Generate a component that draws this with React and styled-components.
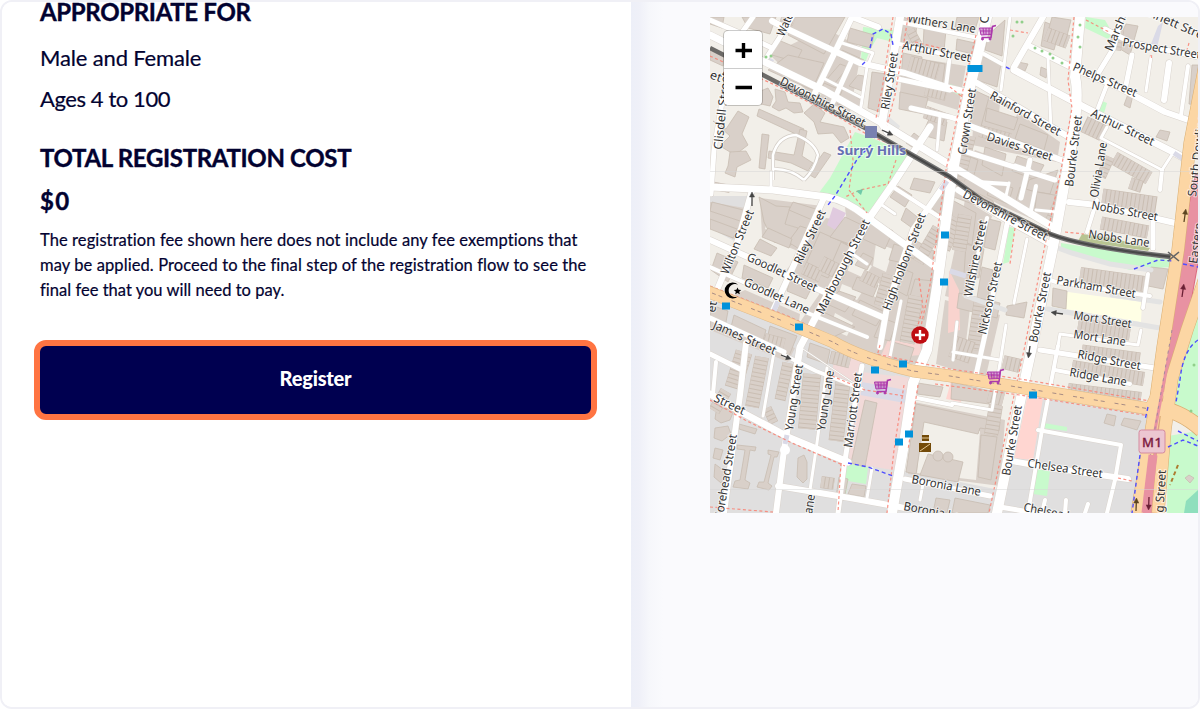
import React from 'react';
import styled, { createGlobalStyle } from 'styled-components';

const GlobalStyle = createGlobalStyle`
  body {
    margin: 0;
    background: #fff;
  }
`;

const Frame = styled.div`
  box-sizing: border-box;
  display: flex;
  width: 1200px;
  height: 709px;
  border: 2px solid #f0f0f6;
  border-radius: 12px;
  overflow: hidden;
  color: #020230;
  font-family: Lato, 'Open Sans', sans-serif;
`;

const Details = styled.main`
  box-sizing: border-box;
  flex: none;
  width: 629px;
  padding: 0 34px 0 38px;
  background: #fff;
`;

const Aside = styled.aside`
  display: flex;
  flex: 1;
  align-items: flex-start;
  justify-content: flex-end;
  padding-top: 15px;
  background: linear-gradient(90deg, #edeff8 0, #eff0f8 8px, #f6f7fb 18px, #fafafd 32px);
`;

const Heading = styled.h2`
  margin: ${({ top }) => top}px 0 0;
  font-size: 24px;
  font-weight: 700;
  line-height: ${({ line }) => line}px;
  letter-spacing: ${({ spacing }) => spacing}px;
  white-space: nowrap;
  -webkit-text-stroke: 0.4px currentColor;
`;

const Facts = styled.div`
  margin-top: 15px;
  font-size: 22px;
  line-height: 41px;
  -webkit-text-stroke: 0.2px currentColor;
`;

const Fact = styled.div`
  letter-spacing: ${({ spacing }) => spacing}px;
`;

const Note = styled.p`
  margin: 12px 0 0;
  font-size: 16.5px;
  line-height: 25px;
  white-space: nowrap;
  -webkit-text-stroke: 0.2px currentColor;
`;

const NoteLine = styled.span`
  display: block;
  letter-spacing: ${({ spacing }) => spacing}px;
`;

const RegisterButton = styled.button`
  box-sizing: border-box;
  display: block;
  width: 563px;
  height: 80px;
  margin: 37px 0 0 -6px;
  padding: 0 0 5px;
  border: 6px solid #ff7442;
  border-radius: 12px;
  background: #000050;
  color: #fff;
  font: 900 20px Lato, sans-serif;
  letter-spacing: -0.2px;
`;

const MapBox = styled.div`
  position: relative;
  width: 488px;
  height: 496px;
  overflow: hidden;
  background: #f2efe9;
`;

const MapDrawing = styled.svg`
  display: block;
`;

const ZoomControl = styled.div`
  position: absolute;
  top: 14px;
  left: 14px;
  border-radius: 4px;
  background: #fff;
  box-shadow: 0 0 0 1px rgba(0, 0, 0, 0.2);
`;

const ZoomButton = styled.button`
  display: flex;
  box-sizing: border-box;
  align-items: center;
  justify-content: center;
  width: 38px;
  height: 37px;
  padding: 2px 0 0 1px;
  border: 0;
  background: none;
  & + & {
    padding-top: 1px;
    border-top: 1px solid #ccc;
  }
`;

// [points, fill]
const areas = [
  ['710,297 790,325 870,362 910,372 900,440 890,513 710,513', '#e0dfdf'],
  ['710,196 752,196 736,242 710,228', '#e0dfdf'],
  ['1038,392 1150,410 1136,513 997,513 1012,450', '#e0dfdf'],
  ['900,470 1000,490 995,513 892,513', '#e0dfdf'],
  ['845,207 867,220 938,272 925,366 870,358 835,340 800,322 850,250', '#d9d0c9'],
  ['826,218 862,224 824,290 785,272', '#d9d0c9'],
  ['745,290 800,314 798,328 728,298', '#d9d0c9'],
  ['712,318 795,348 788,362 710,330', '#d9d0c9'],
  ['965,200 992,216 968,302 945,296', '#d9d0c9'],
  ['945,300 1000,315 985,380 936,364', '#d9d0c9'],
  ['975,150 1060,182 1052,228 1000,205 955,180', '#d9d0c9'],
  ['975,92 1000,100 1060,142 1057,162 972,145', '#d9d0c9'],
  ['904,56 966,66 958,110 900,92', '#d9d0c9'],
  ['770,55 825,28 862,48 850,112 812,96', '#d9d0c9'],
  ['760,198 822,206 800,252 762,236', '#d9d0c9'],
  ['710,202 745,208 736,240 710,228', '#d9d0c9'],
  ['914,402 1005,420 1000,486 908,474', '#d9d0c9'],
  ['847,252 872,266 864,278 842,268', '#f2efe9'],
  ['876,243 893,249 886,272 873,266', '#f2efe9'],
  ['835,313 853,323 847,336 830,329', '#f2efe9'],
  ['898,262 905,264 896,300 890,297', '#f2efe9'],
  ['842,284 862,292 857,300 839,293', '#f2efe9'],
  ['876,282 886,287 883,299 872,296', '#f2efe9'],
  ['788,70 806,76 800,88 782,80', '#f2efe9'],
  ['770,212 780,216 773,232 765,229', '#f2efe9'],
  ['786,224 804,230 798,240 784,236', '#f2efe9'],
  ['1000,104 1018,113 1014,120 999,113', '#f2efe9'],
  ['988,148 1006,158 996,172 984,166', '#f2efe9'],
  ['970,308 982,311 976,344 966,342', '#f2efe9'],
  ['862,372 910,378 898,470 848,462', '#f2dad9'],
  ['878,400 905,404 893,470 868,466', '#f2d9d9'],
  ['835,352 862,362 858,384 832,374', '#f2dad9'],
  ['888,340 920,343 922,355 880,358', '#f6d6d2'],
  ['895,375 908,378 905,388 893,385', '#f2dad9'],
  ['952,378 964,382 961,402 946,399', '#ffd6d1'],
  ['949,270 959,290 960,330 948,333', '#f9d3ce'],
  ['1028,394 1043,398 1033,460 1014,458', '#ffd6d1'],
  ['855,132 872,138 915,157 895,184 867,213 845,202 818,194 830,178', '#c8facc'],
  ['863,27 893,30 893,42 877,38 870,50 865,63 861,60', '#c8facc'],
  ['1086,17 1105,20 1113,34 1108,39 1085,28', '#c8facc'],
  ['1061,243 1171,260 1171,267 1130,270 1061,251', '#c8facc'],
  ['1009,227 1015,228 1009,262 1003,264', '#c8facc'],
  ['1102,101 1107,103 1104,113 1098,110', '#c8facc'],
  ['950,84 963,88 961,96 950,91', '#c8facc'],
  ['1044,423 1067,427 1067,431 1043,428', '#c8facc'],
  ['1035,468 1050,471 1047,496 1033,494', '#c8facc'],
  ['844,463 868,467 866,484 848,481 846,494 838,493', '#c8facc'],
  ['1198,297 1182,350 1177,380 1168,403 1198,421', '#c8facc'],
  ['1168,436 1198,431 1198,513 1167,513', '#c8facc'],
  ['1198,490 1186,501 1184,513 1198,513', '#8fdfbd'],
  ['1068,292 1142,302 1141,322 1054,307 1052,300', '#ffffe5'],
  ['833,207 846,213 837,231 827,225', '#e0cadf'],
  ['766,56 774,60 771,66 763,63', '#dadae7'],
  ['862,382 906,390 905,403 860,395', '#dadae7'],
  ['1158,26 1163,22 1157,48 1151,44', '#dadae7'],
  ['887,115 900,126 896,134 887,128', '#e4e4e4'],
  ['1082,234 1112,238 1150,248 1148,251 1078,241', '#b8c492'],
  ['922,420 980,431 976,480 917,473', '#f2efe9'],
];

const buildings = [
  '794,17 845,17 824,54 788,35',
  '776,39 802,50 796,62 772,55',
  '788,55 824,63 812,90 768,70',
  '850,28 874,35 871,48 847,42',
  '842,50 864,60 862,65 839,57',
  '824,83 840,90 833,106 817,98',
  '858,75 864,76 862,91 849,86',
  '843,88 861,100 859,110 837,104',
  '872,72 887,74 880,112 868,108',
  '840,64 848,67 835,83 827,79',
  '710,50 724,54 723,66 710,60',
  '742,17 776,17 770,34 748,28',
  '710,17 724,17 722,28 710,24',
  '903,17 917,22 915,45 901,43',
  '924,28 946,30 944,51 923,46',
  '903,53 922,57 919,81 901,77',
  '929,61 945,64 942,86 926,82',
  '900,92 928,98 924,114 899,109',
  '930,117 947,122 944,141 922,135',
  '914,133 922,139 915,149 906,143',
  '957,17 979,17 975,30 955,27',
  '957,39 975,43 973,54 956,50',
  '988,35 1005,20 1002,56 985,50',
  '981,56 1001,64 997,87 977,80',
  '1045,22 1060,28 1054,50 1041,46',
  '1052,17 1071,20 1067,36 1049,28',
  '1018,62 1028,64 1025,71 1017,68',
  '1041,67 1048,70 1046,78 1040,75',
  '1126,24 1138,26 1130,55 1115,46',
  '1192,65 1198,65 1198,105 1189,104',
  '1160,130 1170,132 1167,141 1156,137',
  '1128,94 1133,95 1130,108 1124,105',
  '976,91 989,97 980,130 970,125',
  '987,108 1018,118 1014,130 985,121',
  '1020,124 1048,135 1044,150 1015,139',
  '985,147 1006,154 1002,176 982,165',
  '1017,156 1044,165 1036,180 1012,171',
  '1029,180 1058,170 1050,194 1026,190',
  '963,154 978,160 974,175 961,168',
  '955,181 993,201 997,213 951,196',
  '993,181 1013,188 1008,204 987,195',
  '1020,187 1035,192 1029,213 1014,207',
  '1037,192 1060,196 1054,220 1034,216',
  '952,200 976,213 972,245 953,237',
  '966,244 984,249 979,278 964,274',
  '989,219 1001,222 995,250 984,247',
  '982,267 993,270 983,328 973,322',
  '959,293 1000,303 997,318 957,308',
  '1007,306 1027,302 1024,318 1006,315',
  '1053,288 1067,291 1066,309 1052,306',
  '1151,267 1168,269 1163,289 1148,286',
  '775,89 785,92 788,102 800,103 803,112 794,113 786,108 779,111 772,107 776,101',
  '758,92 768,88 773,97 770,106 761,104',
  '713,121 726,129 738,111 749,117 742,134 748,145 735,155 720,146 730,136',
  '759,109 804,129 800,136 757,116',
  '762,134 769,135 765,169 759,168',
  '769,151 794,155 800,129 807,131 802,156 813,163 808,171 791,163 768,158',
  '730,152 746,151 751,160 737,167 735,177 725,173 728,166',
  '804,113 814,104 825,113 820,122 844,127 849,138 841,143 833,133 818,134 814,122',
  '824,152 831,155 815,178 808,174',
  '712,202 747,211 743,222 710,211',
  '710,219 737,229 733,238 710,229',
  '759,197 776,206 790,207 785,224 798,228 791,245 774,242 764,222',
  '793,202 822,211 817,222 789,210',
  '800,226 815,231 801,250 788,242',
  '820,232 847,244 828,278 804,268',
  '845,217 864,226 855,246 830,237',
  '841,242 857,250 842,279 828,272',
  '872,219 893,231 885,249 863,239',
  '863,253 873,258 867,270 855,265',
  '857,277 878,285 873,297 852,289',
  '839,291 856,297 845,312 827,304',
  '860,300 885,312 876,326 852,315',
  '894,244 907,248 904,263 889,260',
  '913,239 934,251 931,266 905,255',
  '896,266 913,273 907,296 894,289',
  '915,279 933,281 924,320 906,310',
  '882,318 896,323 890,341 874,337',
  '893,342 914,348 909,363 890,357',
  '768,228 792,239 789,248 762,237',
  '760,239 777,248 771,256 754,249',
  '717,253 738,262 728,282 711,270',
  '744,265 773,278 768,288 742,278',
  '790,279 811,289 806,299 787,291',
  '728,297 773,312 780,318 724,297',
  '817,309 855,327 833,337 807,326',
  '711,305 728,311 724,333 710,329',
  '734,315 766,330 761,348 729,335',
  '770,326 797,336 789,356 765,347',
  '810,343 830,350 827,364 807,357',
  '898,186 912,195 905,207 890,197',
  '914,178 935,182 930,193 910,189',
  '945,190 950,194 943,217 930,207',
  '906,208 921,220 915,230 901,220',
  '739,424 757,429 755,434 739,429',
  '737,445 756,447 755,451 750,450 745,480 750,483 748,489 733,487 735,481 740,480 745,450 737,449',
  '768,450 779,452 777,457 774,457 768,483 772,486 769,490 757,487 759,482 764,482 771,455 768,454',
  '798,458 804,455 807,462 807,479 803,483 797,477',
  '865,400 877,403 865,467 851,463',
  '916,404 1000,422 999,431 980,428 978,434 924,422 916,474 906,472',
  '928,454 963,462 958,482 920,475',
  '981,435 997,437 991,480 978,477',
  '918,383 943,387 940,397 917,394',
  '952,382 990,391 989,404 951,399',
  '1107,414 1116,416 1114,426 1104,423',
  '1124,418 1141,421 1137,430 1121,425',
  '839,477 848,479 844,500 836,497',
  '852,484 866,486 864,497 848,494',
  '716,412 723,408 734,410 730,420 721,423 715,419',
  '715,428 728,426 731,434 722,441 714,438',
  '715,448 723,450 720,460 713,458',
  '715,464 727,473 721,483 714,477',
  '936,498 950,500 947,513 933,513',
  '955,498 990,505 988,513 952,513',
  '1189,475 1194,478 1190,483 1185,478',
];

// rows of terraces: [x1, y1, x2, y2, depth]
const terraces = [
  [781, 18, 794, 22, 8],
  [909, 64, 938, 72, 17],
  [925, 91, 946, 96, 10],
  [925, 112, 947, 120, 13],
  [910, 30, 922, 52, 9],
  [1046, 34, 1068, 42, 14],
  [1114, 158, 1149, 178, 14],
  [1103, 133, 1084, 124, 17],
  [1110, 157, 1101, 177, 10],
  [1102, 199, 1156, 207, 21],
  [1101, 223, 1148, 232, 13],
  [1080, 275, 1144, 284, 16],
  [1078, 325, 1130, 333, 15],
  [1082, 350, 1140, 358, 11],
  [1072, 367, 1144, 379, 14],
  [1068, 389, 1141, 398, 12],
  [1130, 183, 1142, 187, 12],
  [957, 218, 942, 248, 17],
  [965, 215, 959, 251, 14],
  [980, 303, 973, 350, 13],
  [1003, 362, 1020, 366, 14],
  [952, 346, 972, 353, 22],
  [989, 393, 1004, 397, 19],
  [996, 405, 991, 435, 14],
  [744, 352, 733, 388, 17],
  [762, 357, 752, 407, 14],
  [788, 363, 780, 400, 11],
  [812, 374, 807, 429, 18],
  [843, 382, 836, 441, 15],
  [784, 345, 764, 340, 14],
  [850, 362, 830, 357, 13],
  [890, 275, 881, 306, 15],
  [821, 276, 804, 268, 13],
  [821, 263, 845, 275, 15],
  [916, 296, 907, 343, 15],
  [862, 275, 878, 283, 12],
  [938, 228, 918, 262, 12],
  [726, 391, 714, 411, 12],
  [1115, 50, 1118, 30, 12],
  [970, 136, 959, 180, 12],
  [980, 131, 1010, 139, 12],
  [942, 255, 934, 286, 9],
  [1060, 198, 1050, 220, 9],
  [710, 185, 730, 189, 8],
  [767, 408, 774, 423, 9],
  [821, 482, 834, 484, 12],
];

// [path, width]
const roads = [
  ['M710 35L767 63L825 91L880 122L950 165L997 193L1053 227', 7],
  ['M958 190L1000 216L1052 245', 6],
  ['M710 20L740 33L772 48', 5],
  ['M753 17L743 31', 5],
  ['M792 17L780 37L767 57', 5],
  ['M772 21L783 27L860 63L905 73L950 88L972 93', 6],
  ['M852 17L815 93', 6],
  ['M852 17L878 27', 6],
  ['M852 60L833 102', 5],
  ['M842 43L873 53L867 67L860 113', 3],
  ['M823 78L860 97', 3],
  ['M900 17L882 123L888 132', 8],
  ['M899 44L947 55', 4],
  ['M900 22L988 40', 4],
  ['M898 79L950 90', 5],
  ['M950 55L946 86', 4],
  ['M911 108L950 117L966 122', 5],
  ['M940 116L937 150', 3],
  ['M724 90L714 150L711 194', 5],
  ['M710 187L773 190L827 197Q846 200 867 217L940 270', 7],
  ['M771 172L771 189', 3],
  ['M752 190L738 240L717 290', 6],
  ['M823 200L793 267L772 313', 6],
  ['M710 240L750 258L813 287L882 317', 6],
  ['M710 267L743 282L810 314L867 337', 4],
  ['M930 127L895 181L870 217L823 303L800 347L794 385', 7],
  ['M947 181L913 230L887 307L880 347', 6],
  ['M893 187L947 222', 4],
  ['M879 203L895 214', 3],
  ['M854 255L867 264', 3],
  ['M901 301L890 357', 3],
  ['M967 152L1055 180', 5],
  ['M970 126L1072 164', 6],
  ['M977 83L1074 140', 6],
  ['M984 54L1002 64', 4],
  ['M1010 17L1001 90', 3],
  ['M1043 17L1014 67', 6],
  ['M1014 70L1086 108L1175 153L1186 159', 7],
  ['M1031 47L1073 68L1120 88L1165 112L1194 122', 6],
  ['M1048 57L1051 130', 3],
  ['M1122 17L1113 49L1099 72', 5],
  ['M1105 29L1130 42L1198 57', 5],
  ['M1132 55L1126 85', 5],
  ['M1151 57L1146 91', 3],
  ['M1169 63L1164 100', 6],
  ['M1188 66L1181 115', 4],
  ['M1108 82L1098 108', 4],
  ['M1107 127L1101 138L1162 170L1173 153', 3],
  ['M1162 170L1160 190', 4],
  ['M1097 200L1087 232', 4],
  ['M1069 202L1097 205L1175 223', 6],
  ['M1153 222L1153 248', 5],
  ['M1030 160L1021 198', 5],
  ['M1009 183L1005 200', 3],
  ['M1015 165L1030 170', 3],
  ['M977 182L1007 184', 4],
  ['M1036 186L1030 215', 4],
  ['M1056 212L1036 210', 3],
  ['M1007 224L985 335L976 375', 5],
  ['M987 218L968 295', 4],
  ['M1027 239L1014 303', 3],
  ['M1047 279L1056 282L1150 296', 4],
  ['M1148 274L1143 308', 4],
  ['M1058 346L1060 334L1138 345L1141 330', 3],
  ['M1040 350L1155 368', 5],
  ['M1055 370L1130 384', 4],
  ['M1006 325L1001 357L992 410L952 403', 3],
  ['M957 322L953 360M953 352L1000 360', 3],
  ['M1058 346L1042 430L1028 513', 4],
  ['M1038 430L1121 445L1115 480L1107 513', 4],
  ['M1012 461L1045 467L1128 479', 6],
  ['M1066 500L1065 513M1088 504L1085 513M1045 500L1042 513', 4],
  ['M1000 507L1035 513', 5],
  ['M800 347L860 387L845 384', 1],
  ['M784 355L816 371L862 389', 4],
  ['M710 318L784 352', 5],
  ['M710 354L742 370', 5],
  ['M746 343L740 395L724 513', 6],
  ['M710 394L745 414L790 438L848 462', 7],
  ['M774 352L763 416', 3],
  ['M716 362L713 394', 4],
  ['M800 347L791 408L784 450L776 513', 6],
  ['M827 368L816 450L810 490', 3],
  ['M862 366L850 430L845 460L838 513', 5],
  ['M778 486L850 498L905 508', 6],
  ['M872 468L867 498', 3],
  ['M905 479L990 496', 5],
  ['M912 397L952 405', 4],
  ['M923 484L920 500', 3],
  ['M987 17L970 87L953 170Q950 190 938 280L927 350L913 383L903 450L892 513', 10],
  ['M1080 17L1075 77Q1081 100 1067 170L1053 247L1032 347L1022 393L1010 450L997 513', 10],
];

const greyRoads = [
  'M1058 248L1072 253L1110 264L1151 270',
  'M1048 309L1160 328',
  'M1112 295L1160 302',
  'M966 296L1005 310',
];

const footways = [
  'M893 17L888 50L882 90L876 118',
  'M908 17L903 48L895 95L887 125',
  'M976 35L963 90L946 170L930 285L918 340',
  'M1074 17L1068 80L1072 108L1061 170L1045 245L1024 350L1012 405L989 513',
  'M904 385L894 450L887 513M918 385L908 450',
  'M710 56L775 85L840 118L868 135L900 148L952 181',
  'M850 130L853 160L849 190L867 213M896 160L888 184L860 190L845 197',
  'M710 286L790 317L865 352L950 369L1020 379L1150 401',
  'M935 384L1020 395L1150 416',
  'M710 400L745 420L792 443L845 466M841 463L838 512',
  'M832 376L865 390L905 396',
  'M919 278L923 308L913 342M880 345L876 360',
  'M1015 228L1010 264M1065 232L1084 234',
  'M1189 43L1187 50M1151 55L1152 60',
  'M1086 20L1109 32M950 87L961 96M1010 30L1028 33',
  'M1118 478L1132 481M915 42L948 50',
  'M710 507L773 512',
];

const cyclePaths = [
  'M871 145L858 158L835 196L828 205',
  'M870 48L873 34L883 29L891 34L893 45M865 62L862 65',
  'M1134 269L1158 260L1174 261M1183 264L1198 267',
  'M1198 340Q1183 350 1180 380L1176 402M1148 407L1145 420M1140 455L1132 513',
  'M848 463L868 467L893 476',
  'M1168 447L1183 440L1198 446M1178 431L1198 441',
  'M1006 67L1010 69',
];

// street names run from their first to their last point: [text, x1, y1, x2, y2]
const streetNames = [
  ['Withers Lane', 907, 22, 975, 33],
  ['Arthur Street', 902, 49, 970, 62],
  ['Riley Street', 889, 110, 898, 53],
  ['Devonshire Street', 779, 84, 863, 127],
  ['Clisdell Street', 722, 150, 730, 72],
  ['Waterloo', 784, 37, 801, -2],
  ['et', 709, 78, 720, 82],
  ['Prospect Street', 1122, 46, 1200, 59],
  ['Bennett Street', 1134, 10, 1212, 44],
  ['Marshall', 1112, 52, 1131, 6],
  ['C', 988, 24, 989, 16],
  ['Phelps Street', 1072, 70, 1135, 97],
  ['Arthur Street', 1090, 116, 1152, 146],
  ['Rainford Street', 989, 98, 1058, 136],
  ['Davies Street', 986, 140, 1051, 161],
  ['Crown Street', 966, 155, 976, 89],
  ['Bourke Street', 1073, 187, 1082, 116],
  ['Olivia Lane', 1098, 198, 1107, 143],
  ['Devonshire Street', 962, 197, 1045, 241],
  ['Nobbs Street', 1091, 209, 1157, 221],
  ['Nobbs Lane', 1088, 238, 1149, 247],
  ['Wilshire Street', 972, 297, 987, 221],
  ['Nickson Street', 986, 335, 1002, 263],
  ['Bourke Street', 1037, 343, 1051, 273],
  ['Parkham Street', 1056, 284, 1135, 298],
  ['Mort Street', 1073, 319, 1131, 328],
  ['Mort Lane', 1073, 338, 1125, 346],
  ['Ridge Street', 1077, 358, 1140, 370],
  ['Ridge Lane', 1069, 376, 1126, 386],
  ['Wilton Street', 728, 275, 754, 212],
  ['Riley Street', 801, 265, 826, 212],
  ['Marlborough Street', 823, 315, 870, 222],
  ['High Holborn Street', 890, 311, 926, 215],
  ['Goodlet Street', 746, 260, 815, 292],
  ['Goodlet Lane', 743, 285, 807, 314],
  ['James Street', 712, 328, 774, 355],
  ['et', 715, 313, 717, 302],
  ['Street', 713, 401, 743, 415],
  ['Young Street', 793, 431, 803, 365],
  ['Young Lane', 825, 431, 834, 371],
  ['Marriott Street', 852, 448, 862, 373],
  ['Morehead Street', 722, 523, 737, 435],
  ['Lane', 811, 520, 815, 495],
  ['Boronia Lane', 911, 483, 980, 496],
  ['Boronia Lane', 903, 510, 972, 523],
  ['Bourke Street', 1010, 476, 1022, 406],
  ['Chelsea Street', 1027, 467, 1102, 478],
  ['Chelsea Lane', 1023, 511, 1090, 524],
  ['South Dowling', 1196, 197, 1206, 115],
  ['Eastern', 1197, 264, 1203, 223],
  ['ng Street', 1163, 520, 1166, 470],
];

const busStops = [
  [945, 235],
  [944, 282],
  [726, 306],
  [799, 327],
  [875, 370],
  [903, 364],
  [909, 434],
  [899, 442],
  [1033, 395],
];

const carts = [
  [979, 25],
  [874, 379],
  [987, 369],
];

const StreetName = ({ text, x1, y1, x2, y2 }) => {
  const angle = (Math.atan2(y2 - y1, x2 - x1) * 180) / Math.PI;
  return (
    <text
      transform={`translate(${x1} ${y1}) rotate(${angle})`}
      textLength={Math.hypot(x2 - x1, y2 - y1)}
      lengthAdjust="spacingAndGlyphs"
    >
      {text}
    </text>
  );
};

const Cart = ({ x, y }) => (
  <g transform={`translate(${x} ${y})`} stroke="#ac39ac" fill="none">
    <path d="M17 .5L13.5 1.5L12 12.5H2.5" strokeWidth="1.6" />
    <path d="M.5 3H13L12.5 9.5L2 10Z" fill="#ac39ac" fillOpacity=".45" />
    <path d="M1 6H13M4 3L5 10M7 3V10M10 3V10" />
    <circle cx="3.5" cy="14" r="1" fill="#ac39ac" />
    <circle cx="11" cy="14" r="1" fill="#ac39ac" />
  </g>
);

const Arrow = ({ x, y, angle, length = 12, color = '#444' }) => (
  <g transform={`translate(${x} ${y}) rotate(${angle})`} stroke={color} fill={color}>
    <path d={`M0 0H${length - 4}`} strokeWidth="1.3" />
    <path d={`M${length - 5} -2.5L${length} 0L${length - 5} 2.5Z`} strokeWidth=".5" />
  </g>
);

const StreetMap = () => (
  <MapDrawing width="488" height="496" viewBox="710 17 488 496">
    <g>
      {areas.map(([points, fill]) => (
        <polygon key={points} points={points} fill={fill} />
      ))}
    </g>
    <g fill="#d9d0c9" stroke="#c8bcb1" strokeWidth=".8">
      {buildings.map(points => (
        <polygon key={points} points={points} />
      ))}
      <circle cx="938" cy="456" r="5" />
      <circle cx="948" cy="457" r="5" />
    </g>
    <g>
      {terraces.map(([x1, y1, x2, y2, depth]) => (
        <g key={`${x1}-${y1}`}>
          <path d={`M${x1} ${y1}L${x2} ${y2}`} stroke="#cabeb3" strokeWidth={depth} />
          <path d={`M${x1} ${y1}L${x2} ${y2}`} stroke="#d9d0c9" strokeWidth={depth - 1} strokeDasharray="3.2 1" />
        </g>
      ))}
    </g>
    <g fill="none" stroke="#fff">
      <path d="M773 180V155Q778 136 796 135Q814 142 818 155Q815 169 804 180M772 169Q790 168 804 180" stroke="#d3cdc6" strokeWidth="4" />
      <path d="M773 180V155Q778 136 796 135Q814 142 818 155Q815 169 804 180M772 169Q790 168 804 180" strokeWidth="2.5" />
    </g>
    <g fill="none" stroke="#e3e3e3" strokeWidth="5" strokeLinecap="round">
      {greyRoads.map(d => (
        <path key={d} d={d} />
      ))}
    </g>
    <g fill="none" stroke="#dad4ce" strokeLinecap="round" strokeLinejoin="round">
      {roads.map(([d, width]) => (
        <path key={d} d={d} strokeWidth={width + 1} />
      ))}
    </g>
    <g fill="none" stroke="#fff" strokeLinecap="round" strokeLinejoin="round">
      {roads.map(([d, width]) => (
        <path key={d} d={d} strokeWidth={width} />
      ))}
      <circle cx="785" cy="450" r="5" fill="#fff" stroke="none" />
    </g>
    <g fill="none" stroke="#dadae7" strokeWidth="5">
      <path d="M778 301L773 313M947 181L941 190M1174 153L1188 162M950 271L966 276M787 435L785 444" />
    </g>
    <g fill="none" stroke="#fa8072" strokeOpacity=".85" strokeWidth="1.2" strokeDasharray="3 2.5">
      {footways.map(d => (
        <path key={d} d={d} />
      ))}
    </g>
    <g fill="none" strokeLinejoin="round">
      <path d="M710 48L763 75L867 129" stroke="#6c6a67" strokeWidth="4.5" />
      <path d="M867 129L950 177L983 201L1050 234Q1083 247 1173 257L1198 262" stroke="#707070" strokeWidth="5" />
      <path d="M867 129L950 177L983 201L1050 234Q1083 247 1173 257L1198 262" stroke="#484848" strokeWidth="2.2" />
    </g>
    <g fill="none" strokeLinecap="butt">
      <path d="M1206 175L1187 265L1168 370L1153 450L1146 513" stroke="#dc6a80" strokeWidth="22" />
      <path d="M1206 175L1187 265L1168 370L1153 450L1146 513" stroke="#e892a2" strokeWidth="20" />
      <path d="M1205 65L1190 143L1178 250L1163 347L1153 420L1137 513" stroke="#d9ae72" strokeWidth="13" />
      <path d="M1206 275L1187 330L1172 378L1165 430L1158 513" stroke="#d9ae72" strokeWidth="13" />
      <path d="M706 291L783 321L833 342Q860 358 913 371L950 376L1017 387L1083 398L1150 409L1160 390" stroke="#dfba88" strokeWidth="12.5" />
      <path d="M1152 408Q1178 408 1202 430" stroke="#d9ae72" strokeWidth="16" />
      <path d="M1205 65L1190 143L1178 250L1163 347L1153 420L1137 513" stroke="#fcd6a4" strokeWidth="12" />
      <path d="M1206 275L1187 330L1172 378L1165 430L1158 513" stroke="#fcd6a4" strokeWidth="12" />
      <path d="M706 291L783 321L833 342Q860 358 913 371L950 376L1017 387L1083 398L1150 409L1160 390" stroke="#fcd6a4" strokeWidth="11.5" />
      <path d="M1152 408Q1178 408 1202 430" stroke="#fcd6a4" strokeWidth="14.5" />
      <path d="M1170 350L1155 430" stroke="#e892a2" strokeWidth="3" />
      <path d="M1172 330L1158 410L1148 470" stroke="#a987a0" strokeDasharray="3 4" />
      <path d="M712 293L783 321L833 342Q860 358 913 371L950 376L1017 387L1083 398L1150 409" stroke="#a88c84" strokeDasharray="4 3 4 10" />
      <path d="M1153 455L1146 513" stroke="#e892a2" strokeWidth="9" />
    </g>
    <g fill="none" stroke="#4d4dff" strokeWidth="1.4" strokeDasharray="4 3">
      {cyclePaths.map(d => (
        <path key={d} d={d} />
      ))}
    </g>
    <g fill="#91cf8b">
      {[[1017, 22], [1022, 22], [1013, 36], [1035, 48], [1042, 51], [1050, 54], [1053, 58], [1062, 63], [1080, 25], [1078, 37], [1080, 47], [766, 57], [771, 56], [1191, 411], [1194, 365]].map(([x, y]) => (
        <circle key={`${x}-${y}`} cx={x} cy={y} r="1.5" />
      ))}
    </g>
    <path d="M1168 252L1179 261M1179 252L1168 261" stroke="#666" strokeWidth="1.6" />
    <path d="M1178 465L1170 485" stroke="#ad7b31" strokeWidth="2" strokeDasharray="4 3" />
    <path d="M856 191L863 189L861 195Z" fill="#6fcaa8" />
    <path d="M710 171.5H1198M710 489.5H1198" stroke="#d6d6d6" strokeOpacity=".5" />
    <g fontFamily="'Noto Sans', sans-serif" fontSize="12" fill="#333" stroke="#fff" strokeOpacity=".6" strokeWidth="2" paintOrder="stroke">
      {streetNames.map(([text, x1, y1, x2, y2]) => (
        <StreetName key={`${text}-${x1}-${y1}`} text={text} x1={x1} y1={y1} x2={x2} y2={y2} />
      ))}
    </g>
    <rect x="865" y="126" width="12" height="12" fill="#7981b0" />
    <text
      x="837"
      y="155"
      textLength="69"
      lengthAdjust="spacingAndGlyphs"
      fontFamily="'Noto Sans', sans-serif"
      fontSize="13"
      fontWeight="700"
      fill="#6570b3"
      stroke="#fff"
      strokeOpacity=".6"
      strokeWidth="2"
      paintOrder="stroke"
    >
      Surry Hills
    </text>
    <g fill="#0092da">
      <rect x="967.5" y="65" width="15" height="7" />
      {busStops.map(([x, y]) => (
        <rect key={`${x}-${y}`} x={x - 4} y={y - 3.5} width="8" height="7" />
      ))}
    </g>
    {carts.map(([x, y]) => (
      <Cart key={x} x={x} y={y} />
    ))}
    <circle cx="920" cy="335" r="8.7" fill="#bf0d12" />
    <path d="M920 330V340M915 335H925" stroke="#fff" strokeWidth="2.4" />
    <path d="M738 284.5A8 8 0 1 0 738 296.5A6.6 6.6 0 1 1 738 284.5Z" fill="#000" />
    <path d="M737.5 287.5L738.6 289.8L741.2 290L739.2 291.8L739.8 294.2L737.5 293L735.2 294.2L735.8 291.8L733.8 290L736.4 289.8Z" fill="#000" />
    <g fill="#734a08">
      <path d="M922 435H929V441H922ZM919 443H931V452H919Z" />
      <path d="M922 438H929M920 451L930 444" stroke="#e3c998" />
    </g>
    <Arrow x={752} y={206} angle={-90} length={14} />
    <Arrow x={882} y={130} angle={25} />
    <Arrow x={781} y={355} angle={22} length={11} />
    <Arrow x={1063} y={314} angle={188} />
    <Arrow x={1030} y={346} angle={98} />
    <Arrow x={1184} y={222} angle={-82} length={13} color="#5c4520" />
    <Arrow x={1182} y={297} angle={-82} length={13} color="#6b2035" />
    <Arrow x={1136} y={511} angle={-88} length={13} color="#5c4520" />
    <Arrow x={1149} y={497} angle={92} length={13} color="#6b2035" />
    <rect x="1139" y="430" width="26" height="23" rx="2.5" fill="#ecc6d1" stroke="#d58a9f" />
    <text x="1142" y="446.5" textLength="20" fontFamily="'Noto Sans', sans-serif" fontSize="13" fontWeight="500" fill="#7d1c42" stroke="#7d1c42" strokeWidth=".3">
      M1
    </text>
  </MapDrawing>
);

const App = () => (
  <>
    <GlobalStyle />
    <Frame>
      <Details>
        <Heading top={0} line={20} spacing={-0.34}>
          APPROPRIATE FOR
        </Heading>
        <Facts>
          <Fact spacing={-0.15}>Male and Female</Fact>
          <Fact spacing={-0.42}>Ages 4 to 100</Fact>
        </Facts>
        <Heading top={24} line={30} spacing={-0.32}>
          TOTAL REGISTRATION COST
        </Heading>
        <Heading top={13} line={30} spacing={1.3}>
          $0
        </Heading>
        <Note>
          <NoteLine spacing={0.09}>The registration fee shown here does not include any fee exemptions that</NoteLine>
          <NoteLine spacing={0.09}>may be applied. Proceed to the final step of the registration flow to see the</NoteLine>
          <NoteLine spacing={0.02}>final fee that you will need to pay.</NoteLine>
        </Note>
        <RegisterButton type="button">Register</RegisterButton>
      </Details>
      <Aside>
        <MapBox>
          <StreetMap />
          <ZoomControl>
            <ZoomButton type="button" aria-label="Zoom in">
              <svg width="17" height="17" viewBox="0 0 17 17">
                <path d="M.5 8.5H17M8.5 1V16" stroke="#000" strokeWidth="3.4" />
              </svg>
            </ZoomButton>
            <ZoomButton type="button" aria-label="Zoom out">
              <svg width="17" height="17" viewBox="0 0 17 17">
                <path d="M.5 8.5H17" stroke="#000" strokeWidth="3.4" />
              </svg>
            </ZoomButton>
          </ZoomControl>
        </MapBox>
      </Aside>
    </Frame>
  </>
);

export default App;
